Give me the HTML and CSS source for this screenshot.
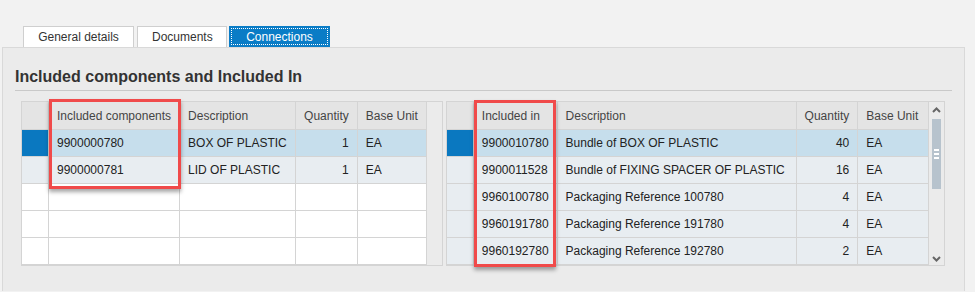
FILE: index.html
```html
<!DOCTYPE html>
<html lang="en">
<head>
    <meta charset="UTF-8">
    <title>Connections</title>
    <link rel="stylesheet" href="styles.css">
</head>
<body>
    <div class="tabs">
        <div class="tab">General details</div>
        <div class="tab">Documents</div>
        <div class="tab active">Connections</div>
    </div>

    <div class="panel">
        <h2 class="heading">Included components and Included In</h2>

        <div class="tables">
            <!-- Included components -->
            <div class="grid grid-left">
                <table>
                    <colgroup>
                        <col style="width:27px"><col style="width:131px"><col style="width:116px"><col style="width:61px"><col style="width:69px">
                    </colgroup>
                    <thead>
                        <tr><th class="sel"></th><th>Included components</th><th>Description</th><th class="num">Quantity</th><th>Base Unit</th></tr>
                    </thead>
                    <tbody>
                        <tr class="selected"><td class="sel"></td><td>9900000780</td><td>BOX OF PLASTIC</td><td class="num">1</td><td>EA</td></tr>
                        <tr class="filled"><td class="sel"></td><td>9900000781</td><td>LID OF PLASTIC</td><td class="num">1</td><td>EA</td></tr>
                        <tr class="empty"><td class="sel"></td><td></td><td></td><td></td><td></td></tr>
                        <tr class="empty"><td class="sel"></td><td></td><td></td><td></td><td></td></tr>
                        <tr class="empty"><td class="sel"></td><td></td><td></td><td></td><td></td></tr>
                    </tbody>
                </table>
                <div class="filler"></div>
                <div class="highlight hl-left"></div>
            </div>

            <!-- Included in -->
            <div class="grid grid-right">
                <table>
                    <colgroup>
                        <col style="width:27px"><col style="width:83px"><col style="width:239px"><col style="width:61px"><col style="width:71px">
                    </colgroup>
                    <thead>
                        <tr><th class="sel"></th><th>Included in</th><th>Description</th><th class="num">Quantity</th><th>Base Unit</th></tr>
                    </thead>
                    <tbody>
                        <tr class="selected"><td class="sel"></td><td>9900010780</td><td>Bundle of BOX OF PLASTIC</td><td class="num">40</td><td>EA</td></tr>
                        <tr class="filled"><td class="sel"></td><td>9900011528</td><td>Bundle of FIXING SPACER OF PLASTIC</td><td class="num">16</td><td>EA</td></tr>
                        <tr class="filled"><td class="sel"></td><td>9960100780</td><td>Packaging Reference 100780</td><td class="num">4</td><td>EA</td></tr>
                        <tr class="filled"><td class="sel"></td><td>9960191780</td><td>Packaging Reference 191780</td><td class="num">4</td><td>EA</td></tr>
                        <tr class="filled"><td class="sel"></td><td>9960192780</td><td>Packaging Reference 192780</td><td class="num">2</td><td>EA</td></tr>
                    </tbody>
                </table>
                <div class="scrollbar">
                    <svg class="arrow" width="15" height="12" viewBox="0 0 15 12"><polyline points="4,8 7.5,4.5 11,8" fill="none" stroke="#666" stroke-width="2"/></svg>
                    <div class="track">
                        <div class="thumb"><span></span><span></span><span></span></div>
                    </div>
                    <svg class="arrow" width="15" height="12" viewBox="0 0 15 12"><polyline points="4,4 7.5,7.5 11,4" fill="none" stroke="#666" stroke-width="2"/></svg>
                </div>
                <div class="highlight hl-right"></div>
            </div>
        </div>
    </div>
</body>
</html>
```

FILE: styles.css
```css
body {
    margin: 0;
    background-color: #f2f2f2;
    font-family: Arial, "Liberation Sans", sans-serif;
    font-size: 12px;
    color: #222;
    overflow: hidden;
}
.tabs {
    display: flex;
    gap: 3px;
    padding: 26px 0 0 23px;
}
.tab {
    height: 20px;
    line-height: 21px;
    padding: 0 14px;
    background-color: #fff;
    border: 1px solid #cfcfcf;
    border-bottom: none;
    color: #333;
    box-sizing: content-box;
}
.tab:nth-child(1) { width: 81px; text-align: center; }
.tab:nth-child(2) { width: 60px; text-align: center; padding: 0 14px; }
.tab.active {
    width: 71px;
    text-align: center;
    background-color: #0a7cc6;
    border-color: #0a7cc6;
    color: #fff;
    outline: 1px dotted #fff;
    outline-offset: -3px;
    margin-left: -1px;
}
.panel {
    margin-left: 2px;
    width: 963px;
    height: 244px;
    background-color: #ebebeb;
    border: 1px solid #d9d9d9;
    border-bottom: none;
    padding: 19px 12px 0 12px;
    box-sizing: border-box;
}
.heading {
    margin: 0;
    font-size: 16px;
    font-weight: bold;
    color: #333;
    line-height: 20px;
    padding-bottom: 3px;
    border-bottom: 1px solid #c9c9c9;
}
.tables {
    display: flex;
    gap: 3px;
    margin: 10px 0 0 6px;
}
.grid {
    position: relative;
    display: flex;
    border: 1px solid #d4d4d4;
    border-left: none;
    border-top: none;
    background-color: #ebebeb;
}
table {
    border-collapse: collapse;
    table-layout: fixed;
}
th, td {
    height: 26px;
    padding: 0 8px;
    border: 1px solid #d4d4d4;
    text-align: left;
    white-space: nowrap;
    overflow: hidden;
}
th {
    height: 27px;
    background-color: #e4e4e4;
    font-weight: normal;
    color: #444;
}
.num {
    text-align: right;
}
tr.selected td {
    background-color: #c6deec;
}
tr.filled td {
    background-color: #e8edf1;
}
tr.empty td {
    background-color: #fff;
}
tr.selected td.sel {
    background-color: #0a78c0;
}
.filler {
    width: 15px;
    border-top: 1px solid #d4d4d4;
}
.scrollbar {
    width: 15px;
    border-top: 1px solid #d4d4d4;
    display: flex;
    flex-direction: column;
    align-items: center;
}
.arrow {
    display: block;
    margin-top: 2px;
}
.track {
    flex: 1;
    width: 15px;
    padding-top: 3px;
    display: flex;
    justify-content: center;
}
.thumb {
    width: 9px;
    height: 70px;
    background-color: #b7c3cd;
    display: flex;
    flex-direction: column;
    align-items: center;
    justify-content: center;
    gap: 2px;
}
.thumb span {
    width: 5px;
    height: 2px;
    background-color: #fff;
}
.highlight {
    position: absolute;
    border: 3px solid #f04a4a;
    box-shadow: 0 3px 4px rgba(0, 0, 0, 0.35);
}
.hl-left {
    left: 28px;
    top: -2px;
    width: 126px;
    height: 84px;
}
.hl-right {
    left: 28px;
    top: -1px;
    width: 76px;
    height: 161px;
}
```
